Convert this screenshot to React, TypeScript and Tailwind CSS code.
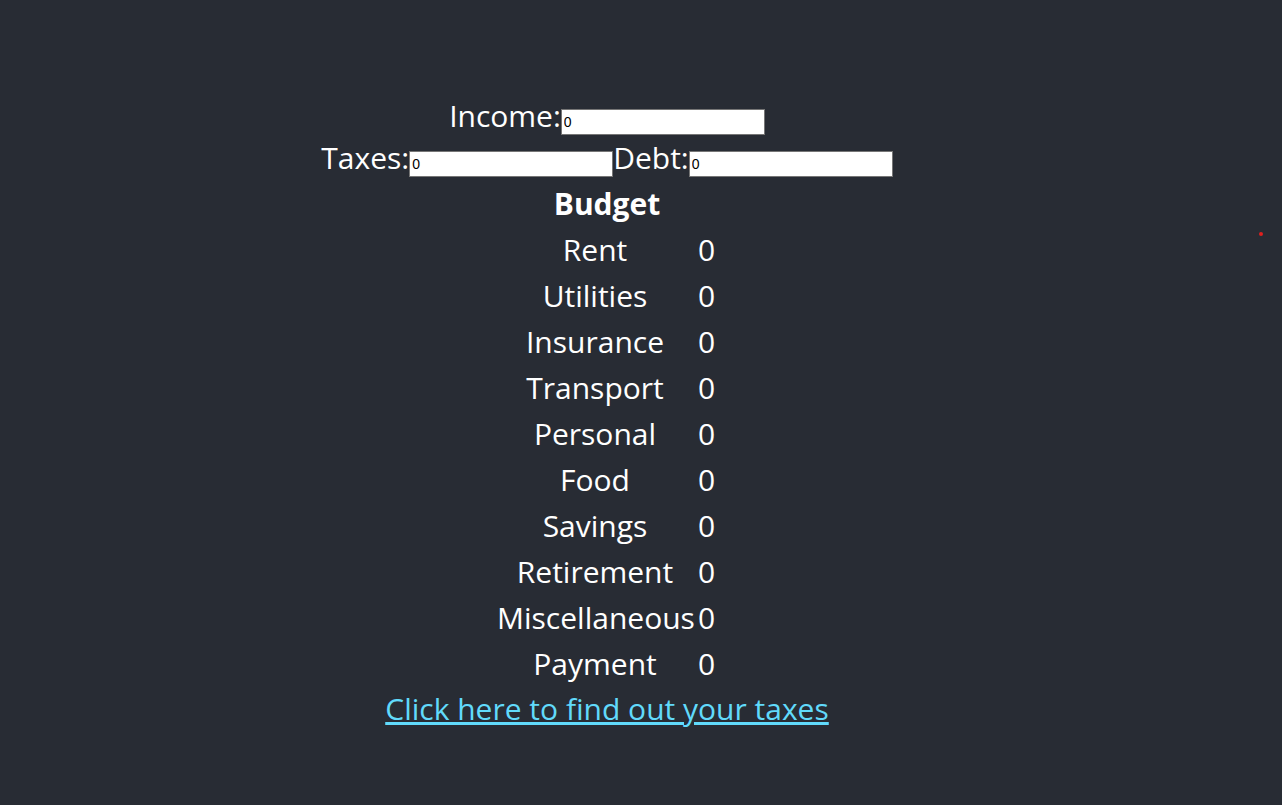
import { useState } from "react";

const categories = [
  "Rent",
  "Utilities",
  "Insurance",
  "Transport",
  "Personal",
  "Food",
  "Savings",
  "Retirement",
  "Miscellaneous",
  "Payment",
];

function NumberField({ value, onChange }: { value: string; onChange: (v: string) => void }) {
  return (
    <input
      type="text"
      value={value}
      onChange={(e) => onChange(e.target.value)}
      className="h-[26px] w-[204px] border border-[#767676] bg-white px-[2px] text-[14px] text-black outline-none [font-family:'Liberation_Sans',Arial,sans-serif]"
    />
  );
}

export default function App() {
  const [income, setIncome] = useState("0");
  const [taxes, setTaxes] = useState("0");
  const [debt, setDebt] = useState("0");

  return (
    <div className="relative min-h-screen bg-[#282c34] text-[30px] text-white [font-family:'Open_Sans',sans-serif]">
      <div className="flex w-[1214px] flex-col items-center pt-[93px]">
        {/* inputs */}
        <div className="flex h-[42px] items-baseline">
          <span>Income:</span>
          <NumberField value={income} onChange={setIncome} />
        </div>
        <div className="flex h-[46px] items-baseline">
          <span>Taxes:</span>
          <NumberField value={taxes} onChange={setTaxes} />
          <span>Debt:</span>
          <NumberField value={debt} onChange={setDebt} />
        </div>

        {/* budget table */}
        <div className="h-[46px] font-bold leading-[46px]">Budget</div>
        <div className="grid grid-cols-[196px_24px]">
          {categories.map((c) => (
            <div key={c} className="contents">
              <div className="h-[46px] text-center leading-[46px]">{c}</div>
              <div className="h-[46px] pl-[5px] leading-[46px]">0</div>
            </div>
          ))}
        </div>

        <a href="#" className="leading-[44px] text-[#61dafb] underline">
          Click here to find out your taxes
        </a>
      </div>

      <div className="absolute left-[1259px] top-[232px] h-[4px] w-[4px] rounded-full bg-[#e0201e]" />
    </div>
  );
}
